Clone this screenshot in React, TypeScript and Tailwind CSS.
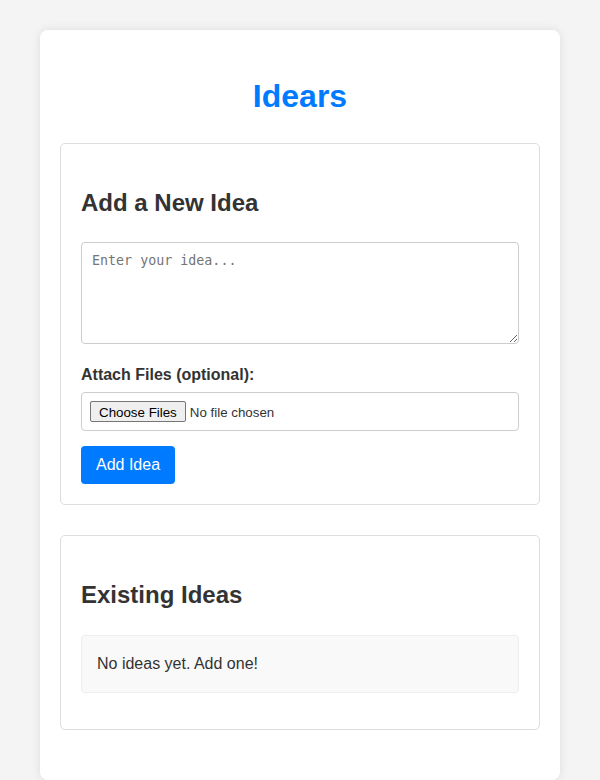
import React from "react";

export default function App() {
  return (
    <div className="min-h-screen bg-[#f4f4f4] pt-[30px] pb-5 font-['Liberation_Sans',Arial,sans-serif] text-[#333] leading-[1.6]">
      <div className="mx-auto w-[520px] rounded-lg bg-white p-5 shadow-[0_0_10px_rgba(0,0,0,0.1)]">
        <h1 className="mt-[21px] mb-[20.5px] text-center text-[32px] font-bold leading-[1.6] text-[#007bff]">
          Idears
        </h1>
        <div className="mb-[30px] rounded-[5px] border border-[#ddd] p-5">
          <h2 className="my-[19.92px] text-[24px] font-bold leading-[1.6]">Add a New Idea</h2>
          <textarea
            placeholder="Enter your idea..."
            className="block h-[102px] w-full resize-y rounded-[4px] border border-[#ccc] p-[10px] font-['DejaVu_Sans_Mono',monospace] text-[13.33px] leading-[1.2] placeholder:text-[#757575]"
          />
          <label className="mt-[18px] mb-[5px] block text-[16px] font-bold">Attach Files (optional):</label>
          <input
            type="file"
            multiple
            className="block h-[39px] w-full rounded-[4px] border border-[#ccc] px-2 py-[8px] text-[13.33px] leading-[21px] file:mr-[4px] file:h-[21px] file:rounded-[2px] file:border file:border-solid file:border-[#767676] file:bg-[#efefef] file:px-[8px] file:py-0 file:text-[13.33px] file:text-black"
          />
          <button className="mt-[15px] block rounded-[4px] bg-[#007bff] px-[15px] py-[10px] text-[16px] leading-[18px] text-white">
            Add Idea
          </button>
        </div>
        <div className="mb-[30px] rounded-[5px] border border-[#ddd] p-5">
          <h2 className="my-[19.92px] text-[24px] font-bold leading-[1.6]">Existing Ideas</h2>
          <div className="mb-4 rounded-[4px] border border-[#eee] bg-[#f9f9f9] p-[15px] text-[16px] leading-[26px]">
            No ideas yet. Add one!
          </div>
        </div>
      </div>
    </div>
  );
}
